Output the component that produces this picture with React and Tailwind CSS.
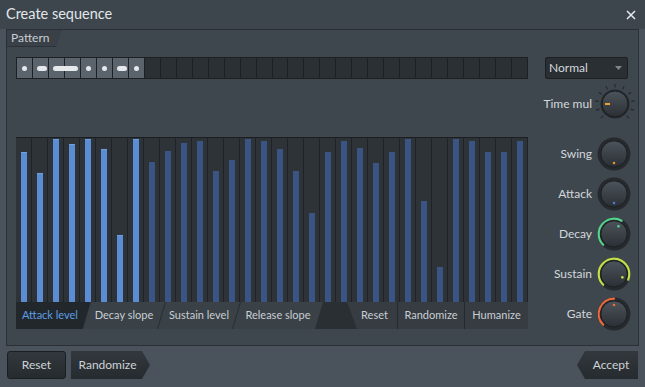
const TOPS = [152, 173, 139, 144, 139, 149, 235, 139, 162, 151, 143, 141, 171, 160, 139, 141, 149, 171, 213, 152, 141, 148, 163, 152, 139, 201, 267, 139, 141, 152, 152, 141]

function pt(c, r, a) {
  const t = (a * Math.PI) / 180
  return [c + r * Math.sin(t), c - r * Math.cos(t)]
}

function arcPath(c, r, a0, a1) {
  const [x0, y0] = pt(c, r, a0)
  const [x1, y1] = pt(c, r, a1)
  const large = a1 - a0 > 180 ? 1 : 0
  return `M${x0} ${y0} A${r} ${r} 0 ${large} 1 ${x1} ${y1}`
}

function Knob({ id, value, arc, dot }) {
  const c = 18
  const [dx, dy] = pt(c, 9, value)
  return (
    <svg width="36" height="36" viewBox="0 0 36 36">
      <defs>
        <linearGradient id={id} x1="0" y1="0" x2="0" y2="1">
          <stop offset="0%" stopColor="#4c545b" />
          <stop offset="100%" stopColor="#2a2f34" />
        </linearGradient>
      </defs>
      <circle cx={c} cy={c} r="16.5" fill="#262a2e" />
      {arc && <path d={arcPath(c, 15.3, -135, value)} stroke={arc} strokeWidth="2.2" fill="none" strokeLinecap="round" />}
      <circle cx={c} cy={c} r="13.2" fill={`url(#${id})`} stroke="#1b1e21" strokeWidth="1" />
      <circle cx={dx} cy={dy} r="1.3" fill={dot} />
    </svg>
  )
}

function TimeKnob() {
  const c = 21
  const ticks = []
  for (let i = 0; i < 11; i++) {
    const a = -135 + i * 27
    const [x0, y0] = pt(c, 16.5, a)
    const [x1, y1] = pt(c, 20, a)
    ticks.push(<line key={i} x1={x0} y1={y0} x2={x1} y2={y1} stroke="#25292d" strokeWidth="1.2" />)
  }
  return (
    <svg width="42" height="42" viewBox="0 0 42 42" className="shrink-0">
      <defs>
        <linearGradient id="kg-time" x1="0" y1="0" x2="0" y2="1">
          <stop offset="0%" stopColor="#4c545b" />
          <stop offset="100%" stopColor="#2a2f34" />
        </linearGradient>
      </defs>
      {ticks}
      <circle cx={c} cy={c} r="14.5" fill="#262a2e" />
      <circle cx={c} cy={c} r="13" fill="url(#kg-time)" stroke="#1b1e21" strokeWidth="1" />
      <line x1={c - 10} y1={c} x2={c - 5} y2={c} stroke="#f0a030" strokeWidth="2" />
    </svg>
  )
}

function KnobRow({ label, children }) {
  return (
    <div className="h-[40px] flex items-center justify-end gap-[4px]">
      <span className="text-[12px] text-[#d2d7db]">{label}</span>
      {children}
    </div>
  )
}

export default function App() {
  return (
    <div className="w-[645px] h-[387px] bg-[#4a535b] flex flex-col font-[Lato,sans-serif] select-none">
      {/* title bar */}
      <div className="h-[29px] bg-[#3d454d] flex items-center justify-between pl-[6px] pr-[9px]">
        <span className="text-[14.5px] text-[#e3e7ea] leading-none">Create sequence</span>
        <svg width="10" height="10" viewBox="0 0 10 10">
          <path d="M1 1L9 9M9 1L1 9" stroke="#e8ebee" strokeWidth="1.5" />
        </svg>
      </div>

      {/* main panel */}
      <div className="mx-[6px] h-[317px] bg-[#3f474e] border border-[#2a3035] flex flex-col">
        <div className="h-[17px] flex">
          <div className="w-[55px] h-full bg-[#394047] border-b border-[#2c3237] [clip-path:polygon(0_0,100%_0,calc(100%-6px)_100%,0_100%)] pl-[4px] flex items-center">
            <span className="text-[12px] text-[#c9ced2] leading-none">Pattern</span>
          </div>
        </div>

        <div className="flex pt-[10px] pl-[9px]">
          {/* left column */}
          <div className="w-[512px] flex flex-col">
            {/* step grid */}
            <div className="relative h-[22px] bg-[#1d2125] flex p-[1px] gap-[1px]">
              {Array.from({ length: 32 }).map((_, i) => (
                <div key={i} className={i < 8 ? 'flex-1 bg-[#5b646c]' : 'flex-1 bg-[#2b3034]'} />
              ))}
              <div className="absolute left-[6px] top-[8.5px] w-[5px] h-[5px] rounded-full bg-[#e6e9ec]" />
              <div className="absolute left-[21px] top-[8.5px] w-[10px] h-[5px] rounded-full bg-[#e6e9ec]" />
              <div className="absolute left-[37px] top-[8.5px] w-[25px] h-[5px] rounded-full bg-[#e6e9ec]" />
              <div className="absolute left-[70px] top-[8.5px] w-[5px] h-[5px] rounded-full bg-[#e6e9ec]" />
              <div className="absolute left-[86px] top-[8.5px] w-[5px] h-[5px] rounded-full bg-[#e6e9ec]" />
              <div className="absolute left-[101px] top-[8.5px] w-[10px] h-[5px] rounded-full bg-[#e6e9ec]" />
              <div className="absolute left-[118px] top-[8.5px] w-[5px] h-[5px] rounded-full bg-[#e6e9ec]" />
            </div>

            {/* bars */}
            <div className="mt-[58px] h-[165px] bg-[#1e2226] border-t border-[#1b1f22] flex">
              {TOPS.map((t, i) => (
                <div key={i} className="w-[16px] h-full border-r border-[#1f2327] bg-[#2e3338] flex items-end pl-[5px]">
                  <div
                    className={i < 8 ? 'w-[6px] bg-[#5a8dd3] border-t border-[#6fa0e2]' : 'w-[6px] bg-[#3a5584]'}
                    style={{ height: 302 - t }}
                  />
                </div>
              ))}
            </div>

            {/* tabs */}
            <div className="h-[27px] bg-[#2a2f33] flex text-[11px]">
              <div className="w-[74px] bg-[#22272b] [clip-path:polygon(0_0,100%_0,calc(100%-8px)_100%,0_100%)] flex items-center pl-[6px] text-[#5d9de6]">
                Attack level
              </div>
              <div className="-ml-[7px] w-[82px] bg-[#3a4147] [clip-path:polygon(8px_0,100%_0,calc(100%-8px)_100%,0_100%)] flex items-center justify-center text-[#c9ced3]">
                Decay slope
              </div>
              <div className="-ml-[7px] w-[82px] bg-[#3a4147] [clip-path:polygon(8px_0,100%_0,calc(100%-8px)_100%,0_100%)] flex items-center justify-center text-[#c9ced3]">
                Sustain level
              </div>
              <div className="-ml-[7px] w-[90px] bg-[#3a4147] [clip-path:polygon(8px_0,100%_0,calc(100%-8px)_100%,0_100%)] flex items-center justify-center text-[#c9ced3]">
                Release slope
              </div>
              <div className="flex-1" />
              <div className="w-[181px] bg-[#363c42] [clip-path:polygon(0_0,100%_0,100%_100%,10px_100%)] flex text-[#c9ced3]">
                <div className="w-[50px] flex items-center justify-center pl-[5px]">Reset</div>
                <div className="w-[67px] border-l border-[#24292d] flex items-center justify-center">Randomize</div>
                <div className="flex-1 border-l border-[#24292d] flex items-center justify-center">Humanize</div>
              </div>
            </div>
          </div>

          {/* right column */}
          <div className="ml-[17px] w-[87px] flex flex-col">
            <div className="w-[83px] h-[22px] bg-[#2a2f34] border border-[#1c2024] rounded-[2px] flex items-center justify-between pl-[3px] pr-[5px]">
              <span className="text-[12px] text-[#d3d8dc]">Normal</span>
              <svg width="7" height="4" viewBox="0 0 7 4">
                <path d="M0 0H7L3.5 4Z" fill="#7f878e" />
              </svg>
            </div>
            <div className="h-[44px] mt-[3px] flex items-center justify-end gap-[2px] -mr-[4px] -ml-[8px]">
              <span className="text-[12px] text-[#d2d7db] whitespace-nowrap">Time mul</span>
              <TimeKnob />
            </div>
            <div className="mt-[8px]">
              <KnobRow label="Swing">
                <Knob id="kg-swing" value={180} dot="#e8902a" />
              </KnobRow>
              <KnobRow label="Attack">
                <Knob id="kg-attack" value={180} dot="#4a7ad0" />
              </KnobRow>
              <KnobRow label="Decay">
                <Knob id="kg-decay" value={30} arc="#55d28c" dot="#55d28c" />
              </KnobRow>
              <KnobRow label="Sustain">
                <Knob id="kg-sustain" value={112} arc="#c2df48" dot="#c2df48" />
              </KnobRow>
              <KnobRow label="Gate">
                <Knob id="kg-gate" value={0} arc="#f0693c" dot="#f0693c" />
              </KnobRow>
            </div>
          </div>
        </div>
      </div>

      {/* bottom buttons */}
      <div className="flex items-start justify-between px-[7px] pt-[5px] text-[12px] text-[#ced3d7]">
        <div className="flex gap-[5px]">
          <div className="w-[59px] h-[28px] rounded-[3px] bg-gradient-to-b from-[#32383d] to-[#262b2f] border border-[#1b1f22] flex items-center justify-center">
            Reset
          </div>
          <div className="w-[79px] h-[28px] bg-gradient-to-b from-[#32383d] to-[#262b2f] [clip-path:polygon(0_0,calc(100%-8px)_0,100%_50%,calc(100%-8px)_100%,0_100%)] flex items-center justify-center pr-[6px]">
            Randomize
          </div>
        </div>
        <div className="w-[61px] h-[28px] bg-gradient-to-b from-[#32383d] to-[#262b2f] [clip-path:polygon(8px_0,100%_0,100%_100%,8px_100%,0_50%)] flex items-center justify-center pl-[7px]">
          Accept
        </div>
      </div>
    </div>
  )
}
